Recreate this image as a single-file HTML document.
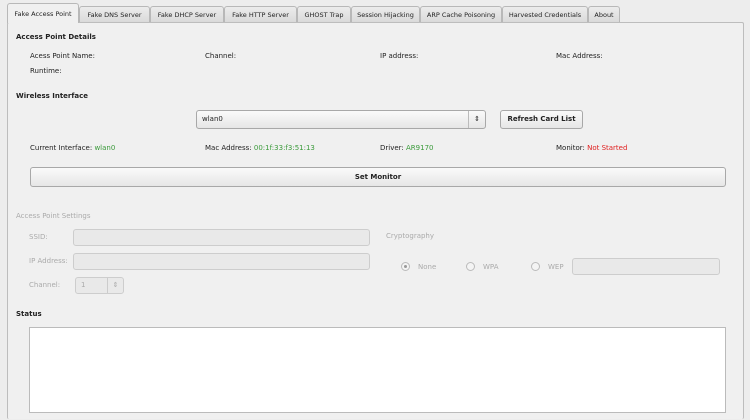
<!DOCTYPE html><html style="overflow:hidden;height:420px"><head><style>
body{margin:0;width:750px;height:420px;background:#ededed;font-family:"DejaVu Sans","Liberation Sans",sans-serif;font-size:7px;color:#222;position:relative;overflow:hidden}
.a{position:absolute;white-space:nowrap}
.tab{position:absolute;top:6px;height:16px;border:1px solid #b8b8b8;border-bottom:none;background:linear-gradient(#ececec,#dadada);border-radius:3px 3px 0 0;text-align:center;line-height:16px;font-size:6.5px;box-sizing:border-box}
.panel{position:absolute;left:7px;top:22px;width:735px;height:396px;border:1px solid #bdbdbd;border-bottom:none;background:#f0f0f0;border-radius:2px}
.b{font-weight:bold}
.g{color:#3a9a3a}.r{color:#e02020}.d{color:#aaa}
.btn{position:absolute;border:1px solid #a8a8a8;border-radius:3px;background:linear-gradient(#fafafa,#e6e6e6);text-align:center;box-sizing:border-box}
.fld{position:absolute;border:1px solid #cdcdcd;border-radius:3px;background:#e9e9e9;box-sizing:border-box}
.rad{position:absolute;width:9px;height:9px;border:1px solid #bbb;border-radius:50%;box-sizing:border-box;background:#f4f4f4}
</style></head><body>
<div class="panel"></div>
<div class="tab" style="left:7px;top:3px;height:20px;width:72px;background:#f0f0f0;line-height:20px">Fake Access Point</div>
<div class="tab" style="left:79px;width:71px">Fake DNS Server</div>
<div class="tab" style="left:150px;width:74px">Fake DHCP Server</div>
<div class="tab" style="left:224px;width:73px">Fake HTTP Server</div>
<div class="tab" style="left:297px;width:54px">GHOST Trap</div>
<div class="tab" style="left:351px;width:69px">Session Hijacking</div>
<div class="tab" style="left:420px;width:82px">ARP Cache Poisoning</div>
<div class="tab" style="left:502px;width:86px">Harvested Credentials</div>
<div class="tab" style="left:588px;width:32px">About</div>

<div class="a b" style="left:16px;top:33px">Access Point Details</div>
<div class="a" style="left:30px;top:52px">Acess Point Name:</div>
<div class="a" style="left:205px;top:52px">Channel:</div>
<div class="a" style="left:380px;top:52px">IP address:</div>
<div class="a" style="left:556px;top:52px">Mac Address:</div>
<div class="a" style="left:30px;top:67px">Runtime:</div>
<div class="a b" style="left:16px;top:92px">Wireless Interface</div>
<div class="btn" style="left:196px;top:110px;width:290px;height:19px;text-align:left;padding-left:5px;line-height:17px">wlan0<span style="position:absolute;right:0;top:0;width:16px;height:17px;border-left:1px solid #bbb;text-align:center">⇕</span></div>
<div class="btn b" style="left:500px;top:110px;width:83px;height:19px;line-height:17px">Refresh Card List</div>
<div class="a" style="left:30px;top:144px">Current Interface: <span class="g">wlan0</span></div>
<div class="a" style="left:205px;top:144px">Mac Address: <span class="g">00:1f:33:f3:51:13</span></div>
<div class="a" style="left:380px;top:144px">Driver: <span class="g">AR9170</span></div>
<div class="a" style="left:556px;top:144px">Monitor: <span class="r">Not Started</span></div>
<div class="btn b" style="left:30px;top:167px;width:696px;height:20px;line-height:18px">Set Monitor</div>
<div class="a d" style="left:16px;top:212px">Access Point Settings</div>
<div class="a d" style="left:29px;top:233px">SSID:</div>
<div class="fld" style="left:73px;top:229px;width:297px;height:17px"></div>
<div class="a d" style="left:29px;top:257px">IP Address:</div>
<div class="fld" style="left:73px;top:253px;width:297px;height:17px"></div>
<div class="a d" style="left:29px;top:281px">Channel:</div>
<div class="fld" style="left:75px;top:277px;width:49px;height:17px;color:#aaa;padding-left:5px;line-height:15px">1<span style="position:absolute;right:0;top:0;width:15px;height:15px;border-left:1px solid #ccc;text-align:center">⇕</span></div>
<div class="a d" style="left:386px;top:232px">Cryptography</div>
<div class="rad" style="left:401px;top:262px"><div style="width:3px;height:3px;background:#999;border-radius:50%;margin:2px"></div></div>
<div class="a d" style="left:418px;top:263px">None</div>
<div class="rad" style="left:466px;top:262px"></div>
<div class="a d" style="left:483px;top:263px">WPA</div>
<div class="rad" style="left:531px;top:262px"></div>
<div class="a d" style="left:548px;top:263px">WEP</div>
<div class="fld" style="left:572px;top:258px;width:148px;height:17px"></div>
<div class="a b" style="left:16px;top:310px">Status</div>
<div style="position:absolute;left:29px;top:327px;width:697px;height:86px;border:1px solid #bbb;background:#fff;box-sizing:border-box"></div>
</body></html>
